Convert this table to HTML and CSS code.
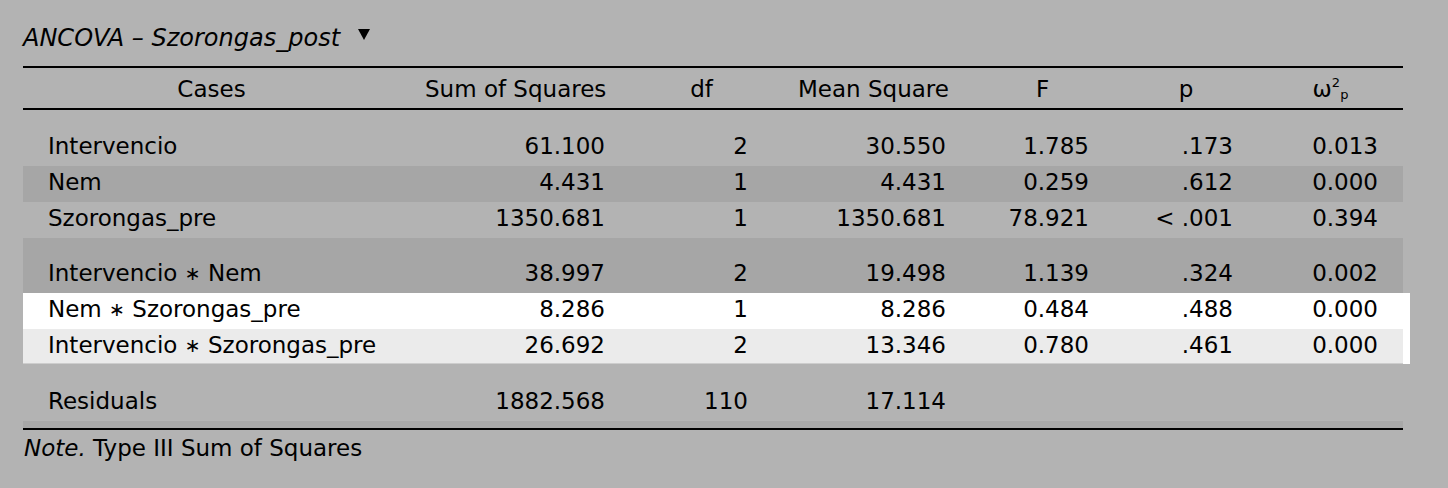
FILE: index.html
```html
<!DOCTYPE html>
<html>
<head>
<meta charset="utf-8">
<link rel="stylesheet" href="styles.css">
</head>
<body>
<div class="page">
  <div class="title"><span class="title-text">ANCOVA – Szorongas_post</span><svg class="caret" width="12" height="11" viewBox="0 0 12 11"><polygon points="0,0 12,0 6,11" fill="#000"/></svg></div>
  <div class="tbl">
    <div class="row head">
      <div class="c">Cases</div>
      <div class="c">Sum of Squares</div>
      <div class="c">df</div>
      <div class="c">Mean Square</div>
      <div class="c">F</div>
      <div class="c">p</div>
      <div class="c">ω<sup>2</sup><sub>p</sub></div>
    </div>
    <div class="row gap">
      <div class="c lab">Intervencio</div>
      <div class="c">61.100</div>
      <div class="c">2</div>
      <div class="c">30.550</div>
      <div class="c">1.785</div>
      <div class="c">.173</div>
      <div class="c">0.013</div>
    </div>
    <div class="row dark">
      <div class="c lab">Nem</div>
      <div class="c">4.431</div>
      <div class="c">1</div>
      <div class="c">4.431</div>
      <div class="c">0.259</div>
      <div class="c">.612</div>
      <div class="c">0.000</div>
    </div>
    <div class="row">
      <div class="c lab">Szorongas_pre</div>
      <div class="c">1350.681</div>
      <div class="c">1</div>
      <div class="c">1350.681</div>
      <div class="c">78.921</div>
      <div class="c">&lt; .001</div>
      <div class="c">0.394</div>
    </div>
    <div class="row dark gap gap19">
      <div class="c lab">Intervencio <span class="op">∗</span> Nem</div>
      <div class="c">38.997</div>
      <div class="c">2</div>
      <div class="c">19.498</div>
      <div class="c">1.139</div>
      <div class="c">.324</div>
      <div class="c">0.002</div>
    </div>
    <div class="hl">
      <div class="row white">
        <div class="c lab">Nem <span class="op">∗</span> Szorongas_pre</div>
        <div class="c">8.286</div>
        <div class="c">1</div>
        <div class="c">8.286</div>
        <div class="c">0.484</div>
        <div class="c">.488</div>
        <div class="c">0.000</div>
      </div>
      <div class="row light">
        <div class="c lab">Intervencio <span class="op">∗</span> Szorongas_pre</div>
        <div class="c">26.692</div>
        <div class="c">2</div>
        <div class="c">13.346</div>
        <div class="c">0.780</div>
        <div class="c">.461</div>
        <div class="c">0.000</div>
      </div>
    </div>
    <div class="row gap gap21">
      <div class="c lab">Residuals</div>
      <div class="c">1882.568</div>
      <div class="c">110</div>
      <div class="c">17.114</div>
      <div class="c"></div>
      <div class="c"></div>
      <div class="c"></div>
    </div>
    <div class="strip"></div>
  </div>
  <div class="note"><em>Note.</em> Type III Sum of Squares</div>
</div>
</body>
</html>
```
FILE: styles.css
```css
html, body {
  margin: 0;
  padding: 0;
  background: #b3b3b3;
}
body {
  font-family: "DejaVu Sans", Verdana, sans-serif;
  font-size: 23px;
  color: #000;
}
.page {
  padding: 20px 0 0 23px;
  width: 1380px;
}
.title {
  font-style: italic;
  font-size: 24px;
  line-height: 36px;
  height: 36px;
  margin-bottom: 10px;
  display: flex;
  align-items: flex-start;
}
.caret {
  margin-left: 18px;
  margin-top: 9px;
}
.tbl {
  width: 1380px;
  border-top: 2px solid #000;
}
.row {
  display: grid;
  grid-template-columns: 377px 230px 143px 198px 143px 144px 145px;
  line-height: 32px;
  padding-bottom: 4px;
  width: 1380px;
}
.c {
  padding: 0 25px;
  text-align: right;
  white-space: nowrap;
}
.c.lab {
  text-align: left;
}
.op {
  font-size: 19px;
  vertical-align: 1px;
}
.head {
  line-height: 38px;
  padding-top: 2px;
  padding-bottom: 0;
  border-bottom: 2px solid #000;
}
.head .c {
  text-align: center;
}
.head sup, .head sub {
  font-size: 13px;
  line-height: 0;
}
.head sup {
  vertical-align: 10px;
}
.head sub {
  vertical-align: -2px;
}
.gap {
  padding-top: 20px;
}
.gap19 {
  padding-top: 19px;
}
.gap21 {
  padding-top: 21px;
}
.dark {
  background: #a6a6a6;
}
.hl {
  background: #fff;
  width: 1380px;
  padding-right: 7px;
  margin-right: -7px;
}
.white {
  background: #fff;
}
.light {
  background: #ebebeb;
  padding-bottom: 2px;
  border-bottom: 1px solid #cdcdcd;
}
.strip {
  height: 7px;
  background: #a8a8a8;
  border-bottom: 2px solid #000;
}
.note {
  line-height: 36px;
  padding-left: 1px;
}
.note em {
  font-style: italic;
}
```
